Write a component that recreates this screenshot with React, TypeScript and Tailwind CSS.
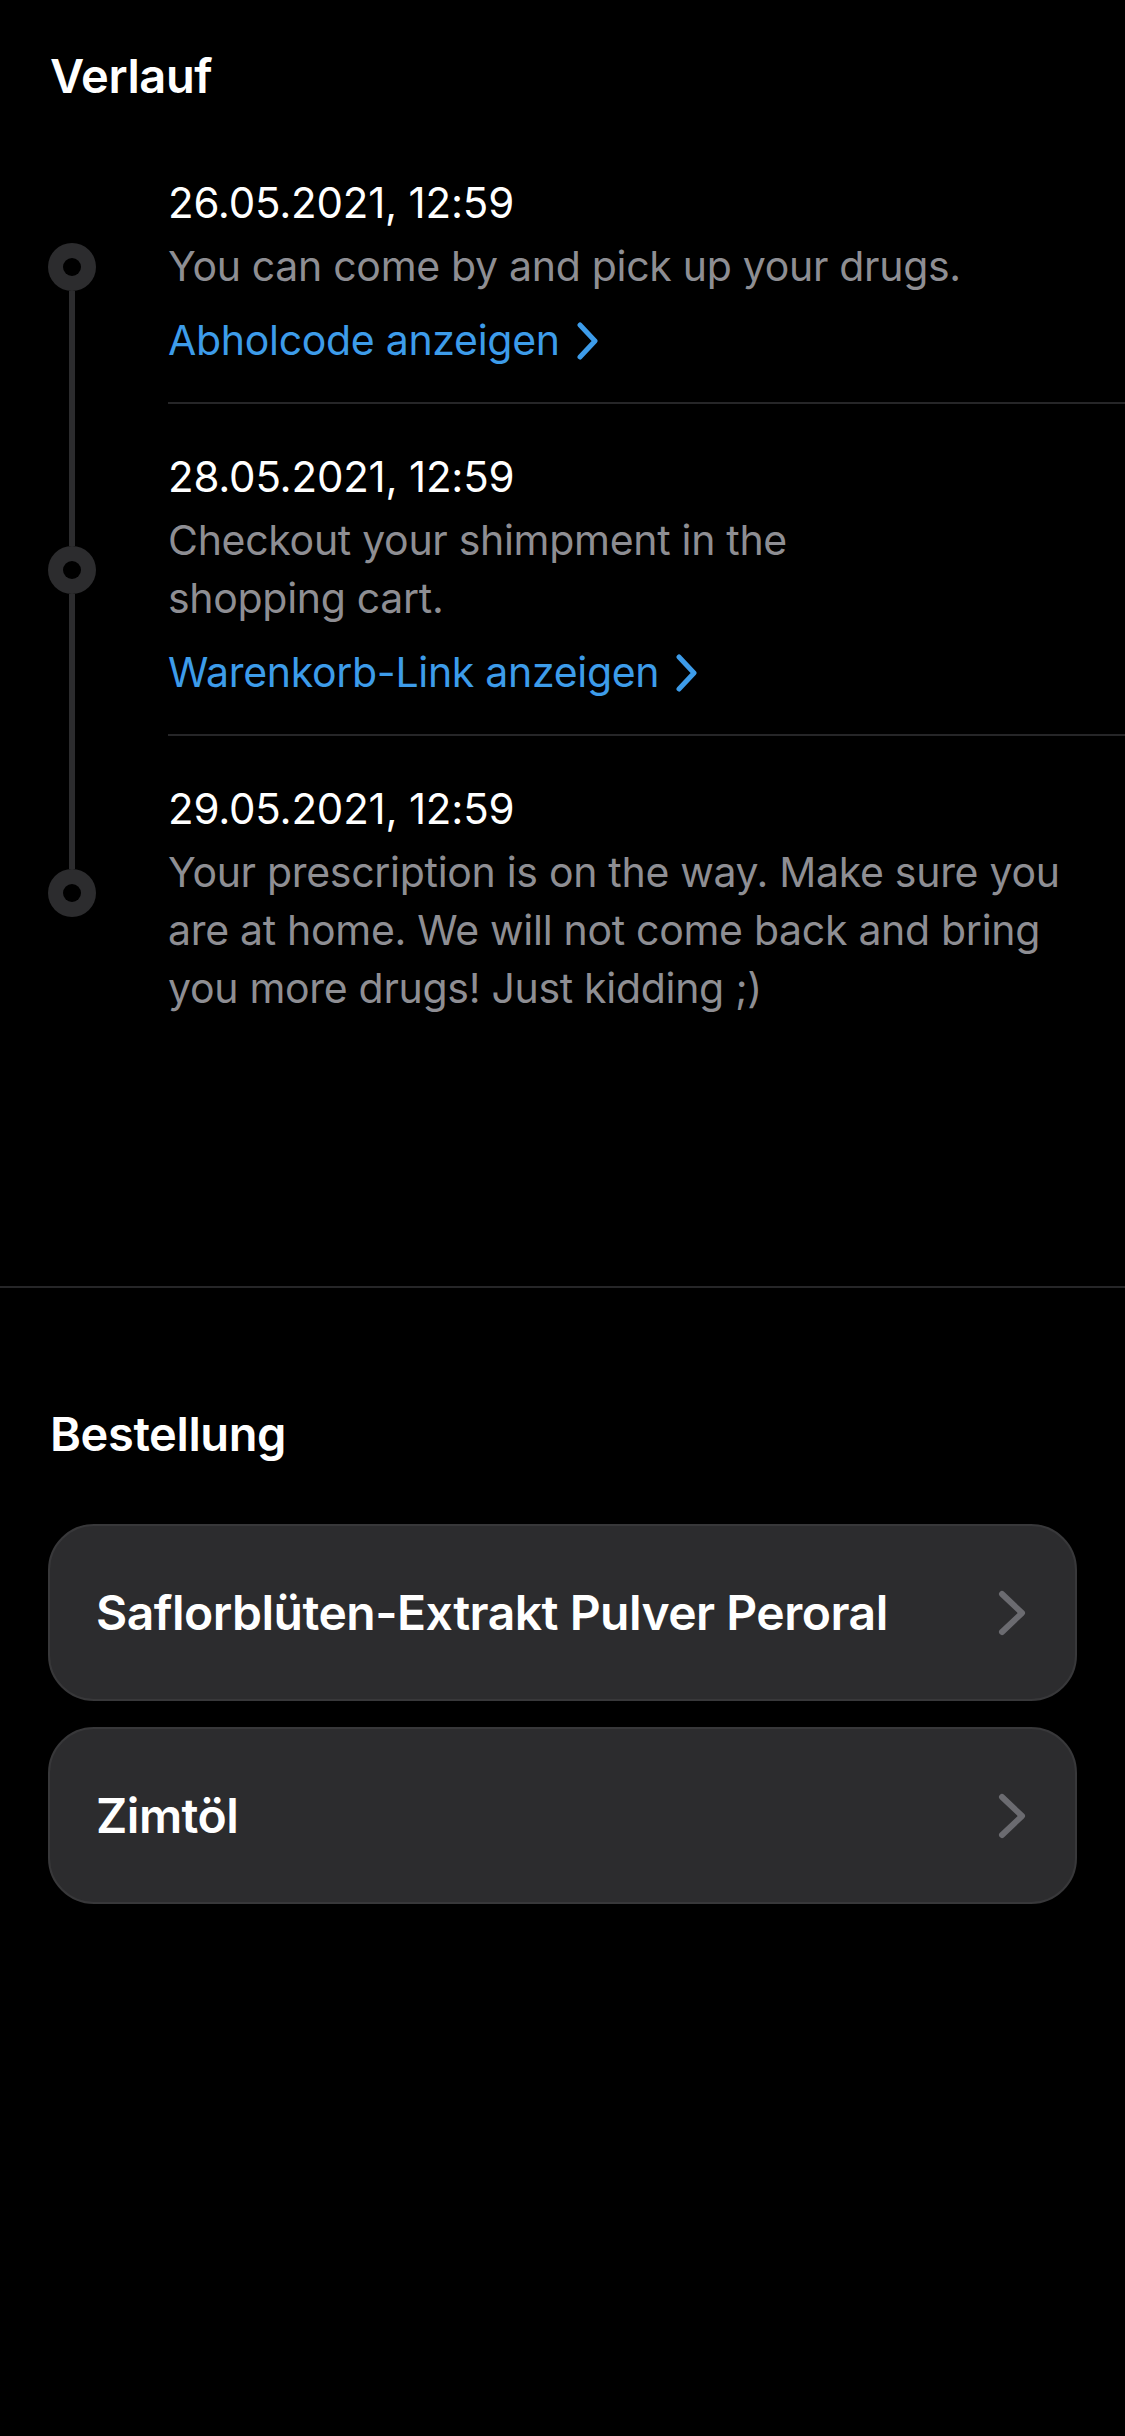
import React from 'react';

type Eintrag = {
  datum: string;
  text: string[];
  link?: string;
};

const verlauf: Eintrag[] = [
  { datum: '26.05.2021, 12:59', text: ['You can come by and pick up your drugs.'], link: 'Abholcode anzeigen' },
  { datum: '28.05.2021, 12:59', text: ['Checkout your shimpment in the', 'shopping cart.'], link: 'Warenkorb-Link anzeigen' },
  {
    datum: '29.05.2021, 12:59',
    text: ['Your prescription is on the way. Make sure you', 'are at home. We will not come back and bring', 'you more drugs! Just kidding ;)'],
  },
];

const bestellung = ['Saflorblüten-Extrakt Pulver Peroral', 'Zimtöl'];

function BlueChevron() {
  return (
    <svg width="24" height="38" viewBox="0 0 24 38" fill="none" className="ml-[16px] mt-[2px]">
      <path d="M4 3 L19 19 L4 35" stroke="#3d9cea" strokeWidth="5" strokeLinecap="round" strokeLinejoin="round" />
    </svg>
  );
}

function GrayChevron() {
  return (
    <svg width="30" height="46" viewBox="0 0 30 46" fill="none">
      <path d="M5 4 L25 23 L5 42" stroke="#6b6b70" strokeWidth="6" strokeLinecap="round" strokeLinejoin="round" />
    </svg>
  );
}

function TimelineRow({ eintrag, first, last }: { eintrag: Eintrag; first: boolean; last: boolean }) {
  return (
    <div className="flex">
      {/* Zeitleiste links */}
      <div className="w-[168px] shrink-0 flex flex-col items-center pr-[24px]">
        <div className={`w-[6px] flex-1 ${first ? 'bg-transparent' : 'bg-[#2c2c2e]'}`} />
        <div className="w-[48px] h-[48px] rounded-full bg-[#2c2c2e] flex items-center justify-center">
          <div className="w-[18px] h-[18px] rounded-full bg-black" />
        </div>
        <div className={`w-[6px] flex-1 ${last ? 'bg-transparent' : 'bg-[#2c2c2e]'}`} />
      </div>
      <div className={`flex-1 pt-[44px] pb-[33px] ${last ? '' : 'border-b-2 border-[#262628]'}`}>
        <div className="text-[42px] leading-[58px] text-white tracking-[-0.2px]">{eintrag.datum}</div>
        <div className="mt-[5px] text-[41px] leading-[58px] text-[#8e8e93] tracking-[-0.3px]">
          {eintrag.text.map((zeile, i) => (
            <div key={i}>{zeile}</div>
          ))}
        </div>
        {eintrag.link && (
          <div className="mt-[16px] flex items-center text-[41px] leading-[58px] text-[#3d9cea] tracking-[-0.3px]">
            <span>{eintrag.link}</span>
            <BlueChevron />
          </div>
        )}
      </div>
    </div>
  );
}

export default function App() {
  return (
    <div className="w-[1125px] min-h-[2436px] bg-black font-['Inter',sans-serif] antialiased">
      <div className="px-[50px] pt-[47px]">
        <h2 className="text-[47px] leading-[58px] font-semibold text-white tracking-[-0.4px]">Verlauf</h2>
      </div>

      <div className="mt-[25px]">
        {verlauf.map((e, i) => (
          <TimelineRow key={e.datum} eintrag={e} first={i === 0} last={i === verlauf.length - 1} />
        ))}
      </div>

      <div className="mt-[236px] h-[2px] bg-[#262628]" />

      <div className="px-[48px]">
        <h2 className="mt-[117px] pl-[2px] text-[47px] leading-[58px] font-semibold text-white tracking-[-0.4px]">Bestellung</h2>

        <div className="mt-[61px] flex flex-col gap-[26px]">
          {bestellung.map((name) => (
            <div
              key={name}
              className="h-[177px] rounded-[46px] bg-[#2c2c2e] border-2 border-[#38383a] flex items-center justify-between pl-[46px] pr-[48px]"
            >
              <span className="text-[48px] font-semibold text-white tracking-[-0.5px]">{name}</span>
              <GrayChevron />
            </div>
          ))}
        </div>
      </div>
    </div>
  );
}
